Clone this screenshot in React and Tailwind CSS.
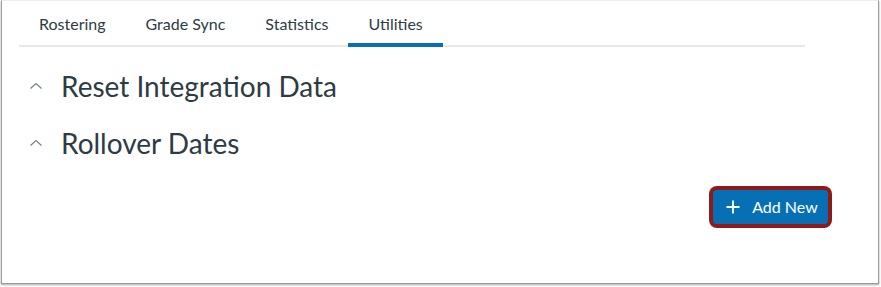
import { Plus } from "lucide-react";

const tabs = ["Rostering", "Grade Sync", "Statistics", "Utilities"];

const Section = ({ title }) => (
    <div className="flex items-center h-[36px]">
        {/* Caret */}
        <div className="w-[59px] pl-[27px] flex items-center">
            <svg width="14" height="8" viewBox="0 0 14 8" fill="none">
                <path d="M1.5 6.5 L7 1.5 L12.5 6.5" stroke="#73818c" strokeWidth="1.2" />
            </svg>
        </div>
        <h2 className="text-[28px] leading-[36px] text-[#2d3b45]">{title}</h2>
    </div>
);

export default function App() {
    return (
        <div
            className="w-[881px] h-[287px] bg-white pl-[1px]"
            style={{ fontFamily: "Lato, 'Liberation Sans', sans-serif" }}
        >
            <div className="w-[878px] h-[284px] bg-white border-x border-b border-[#9a9a9a] border-t border-t-[#ececec] shadow-[0_1px_2px_rgba(0,0,0,0.35)]">
                {/* Tabs */}
                <div className="ml-[17px] w-[786px] flex border-b-2 border-[#e6e9eb] h-[46px]">
                    {tabs.map((t) => (
                        <div
                            key={t}
                            className={`px-[20px] pt-[13px] pb-[9px] text-[16px] leading-[20px] text-[#2d3b45] h-[46px] ${
                                t === "Utilities"
                                    ? "border-b-4 border-[#0770b8] px-[18px]"
                                    : ""
                            }`}
                        >
                            {t}
                        </div>
                    ))}
                </div>

                {/* Sections */}
                <div className="mt-[21px] flex flex-col gap-[21px]">
                    <Section title="Reset Integration Data" />
                    <Section title="Rollover Dates" />
                </div>

                {/* Add button */}
                <div className="flex justify-end pr-[50px] mt-[29px]">
                    <button className="h-[34px] w-[115px] bg-[#0770b5] rounded-[4px] ring-4 ring-[#8e1a1a] flex items-center justify-center gap-[9px] text-white text-[16px]">
                        <Plus className="size-[20px]" strokeWidth={2.2} />
                        <span>Add New</span>
                    </button>
                </div>
            </div>
        </div>
    );
}
